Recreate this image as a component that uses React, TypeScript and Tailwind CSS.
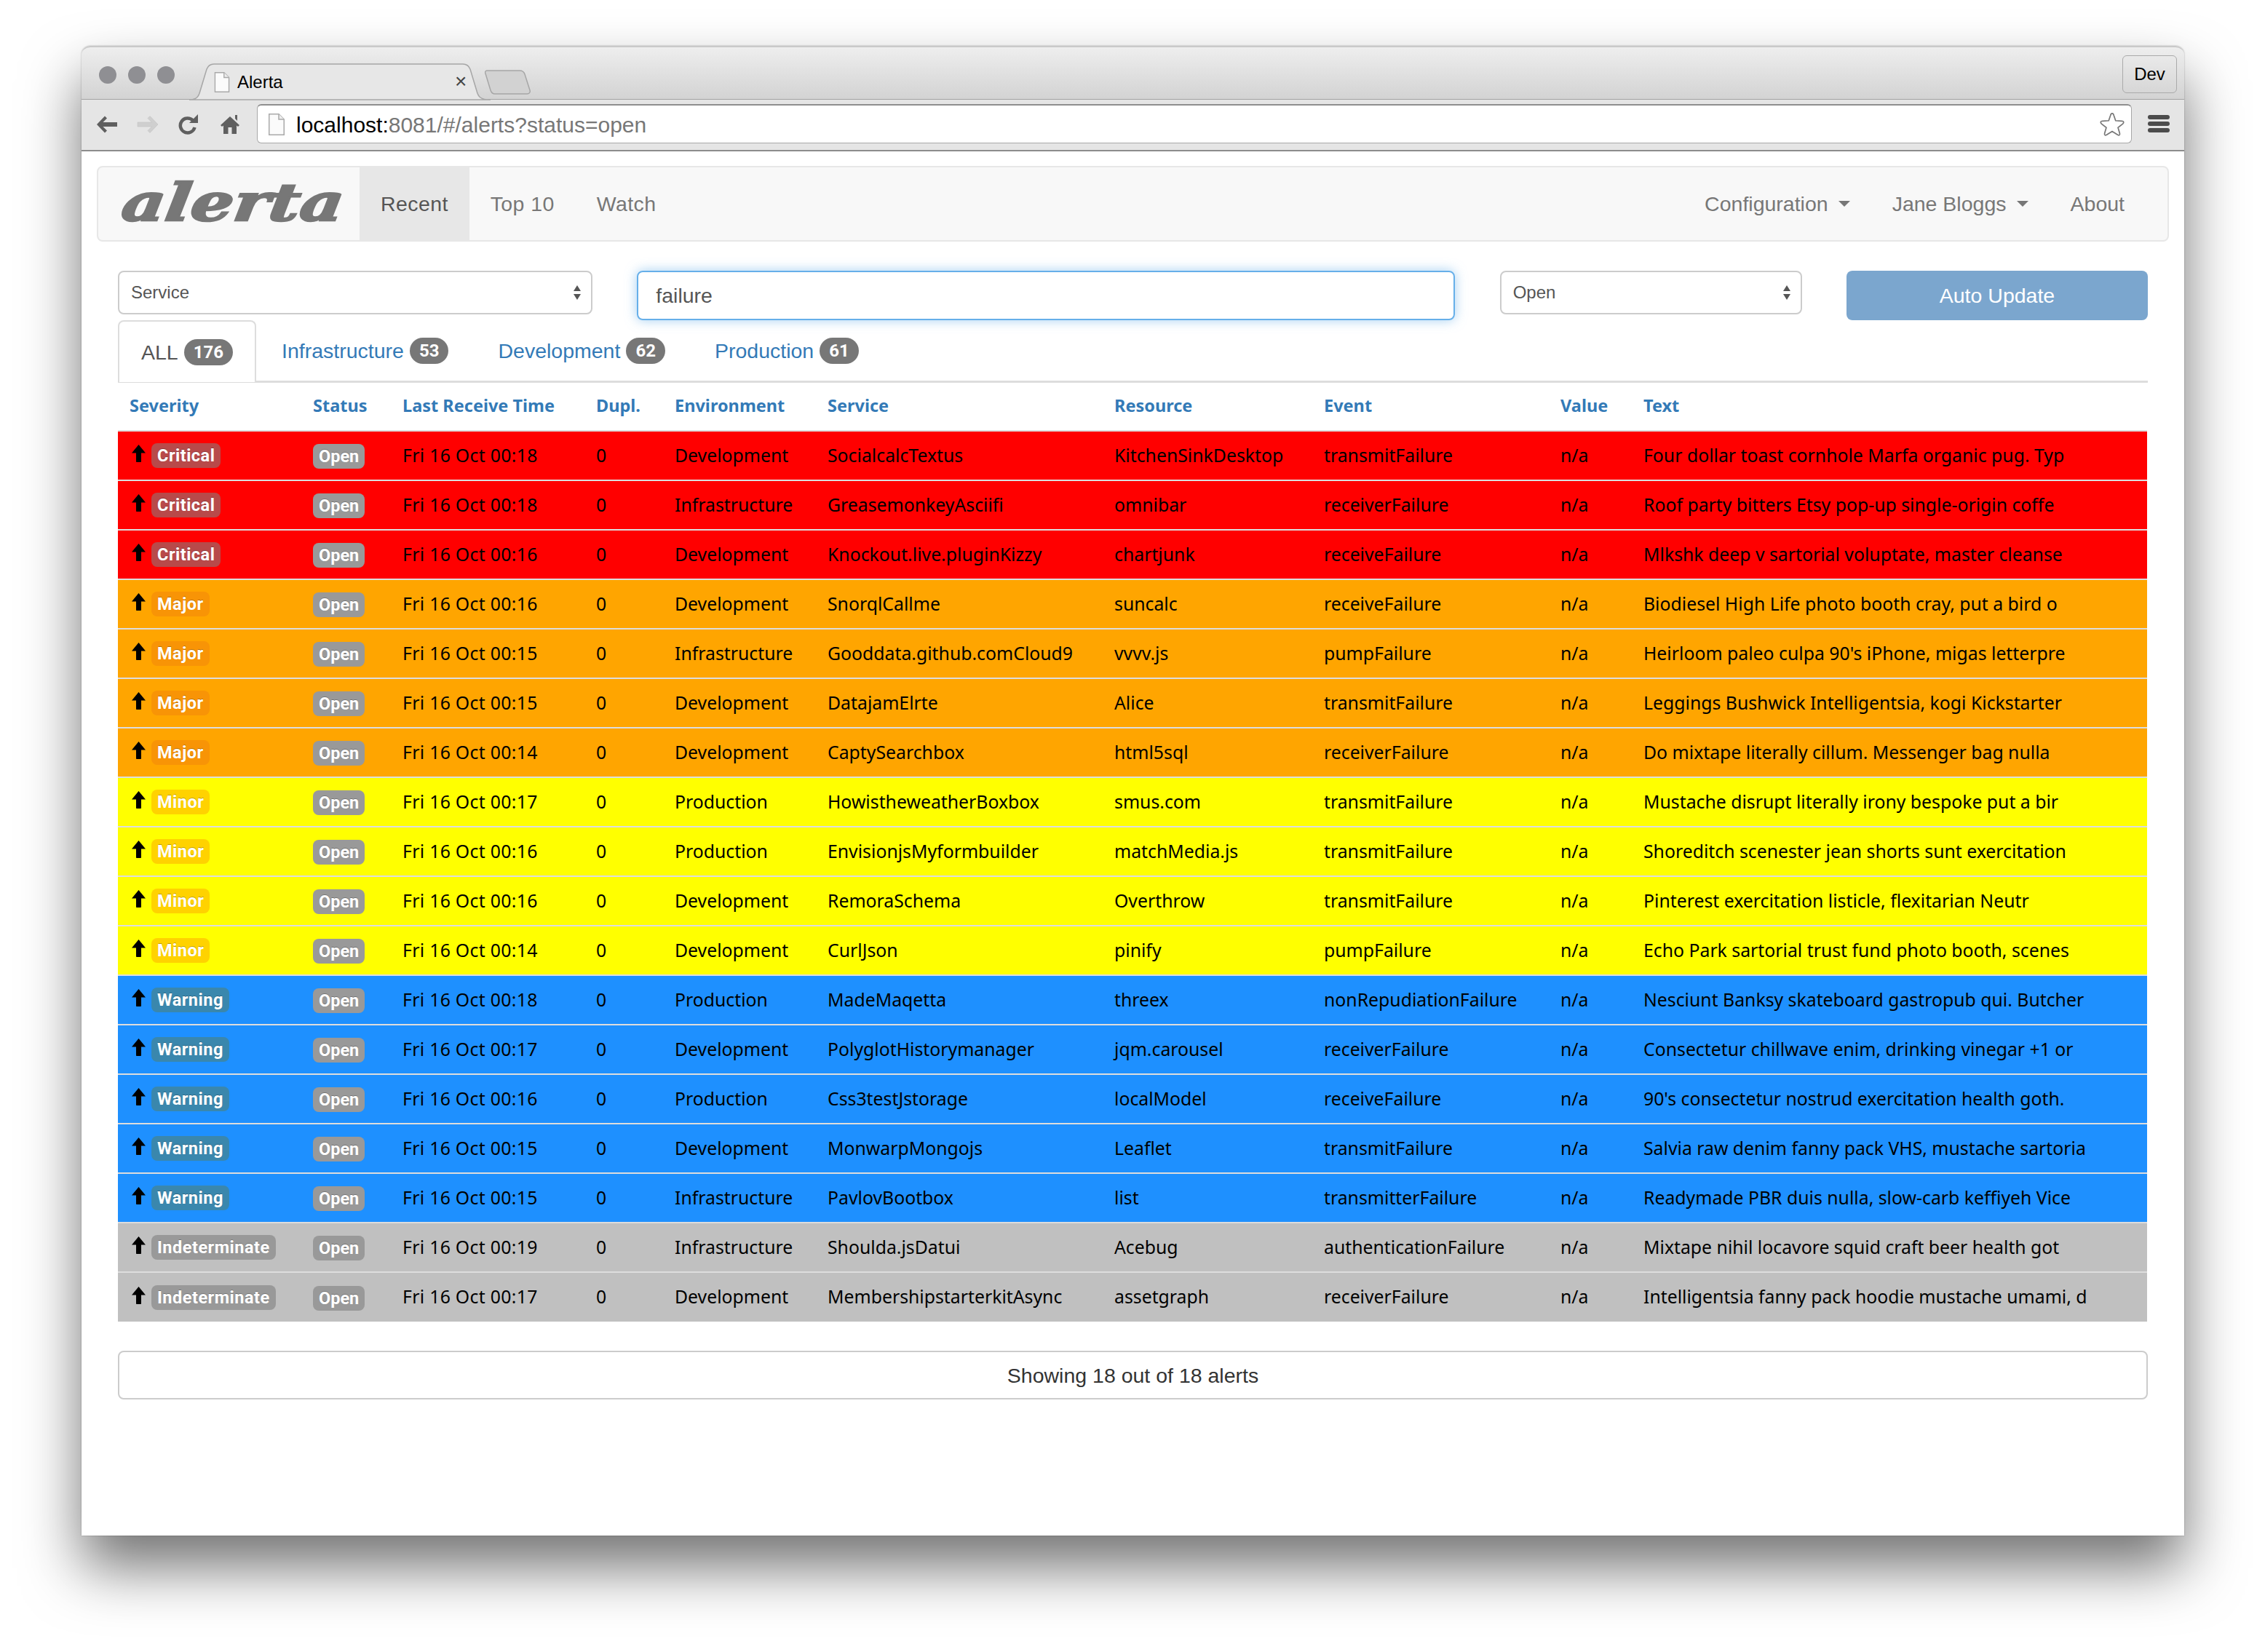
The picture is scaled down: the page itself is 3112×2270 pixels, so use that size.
import React from "react";

type Sev = "Critical" | "Major" | "Minor" | "Warning" | "Indeterminate";
const rowBg: Record<Sev, string> = {
  Critical: "bg-[#ff0000]",
  Major: "bg-[#ffa500]",
  Minor: "bg-[#ffff00]",
  Warning: "bg-[#1e90ff]",
  Indeterminate: "bg-[#c0c0c0]",
};
const labelBg: Record<Sev, string> = {
  Critical: "bg-[#b84a4a]",
  Major: "bg-[#f89406]",
  Minor: "bg-[#ffd200]",
  Warning: "bg-[#3a87ad]",
  Indeterminate: "bg-[#999999]",
};

const rows: [Sev, string, string, string, string, string, string][] = [
  ["Critical", "Fri 16 Oct 00:18", "Development", "SocialcalcTextus", "KitchenSinkDesktop", "transmitFailure", "Four dollar toast cornhole Marfa organic pug. Typ"],
  ["Critical", "Fri 16 Oct 00:18", "Infrastructure", "GreasemonkeyAsciifi", "omnibar", "receiverFailure", "Roof party bitters Etsy pop-up single-origin coffe"],
  ["Critical", "Fri 16 Oct 00:16", "Development", "Knockout.live.pluginKizzy", "chartjunk", "receiveFailure", "Mlkshk deep v sartorial voluptate, master cleanse"],
  ["Major", "Fri 16 Oct 00:16", "Development", "SnorqlCallme", "suncalc", "receiveFailure", "Biodiesel High Life photo booth cray, put a bird o"],
  ["Major", "Fri 16 Oct 00:15", "Infrastructure", "Gooddata.github.comCloud9", "vvvv.js", "pumpFailure", "Heirloom paleo culpa 90's iPhone, migas letterpre"],
  ["Major", "Fri 16 Oct 00:15", "Development", "DatajamElrte", "Alice", "transmitFailure", "Leggings Bushwick Intelligentsia, kogi Kickstarter"],
  ["Major", "Fri 16 Oct 00:14", "Development", "CaptySearchbox", "html5sql", "receiverFailure", "Do mixtape literally cillum. Messenger bag nulla"],
  ["Minor", "Fri 16 Oct 00:17", "Production", "HowistheweatherBoxbox", "smus.com", "transmitFailure", "Mustache disrupt literally irony bespoke put a bir"],
  ["Minor", "Fri 16 Oct 00:16", "Production", "EnvisionjsMyformbuilder", "matchMedia.js", "transmitFailure", "Shoreditch scenester jean shorts sunt exercitation"],
  ["Minor", "Fri 16 Oct 00:16", "Development", "RemoraSchema", "Overthrow", "transmitFailure", "Pinterest exercitation listicle, flexitarian Neutr"],
  ["Minor", "Fri 16 Oct 00:14", "Development", "CurlJson", "pinify", "pumpFailure", "Echo Park sartorial trust fund photo booth, scenes"],
  ["Warning", "Fri 16 Oct 00:18", "Production", "MadeMaqetta", "threex", "nonRepudiationFailure", "Nesciunt Banksy skateboard gastropub qui. Butcher"],
  ["Warning", "Fri 16 Oct 00:17", "Development", "PolyglotHistorymanager", "jqm.carousel", "receiverFailure", "Consectetur chillwave enim, drinking vinegar +1 or"],
  ["Warning", "Fri 16 Oct 00:16", "Production", "Css3testJstorage", "localModel", "receiveFailure", "90's consectetur nostrud exercitation health goth."],
  ["Warning", "Fri 16 Oct 00:15", "Development", "MonwarpMongojs", "Leaflet", "transmitFailure", "Salvia raw denim fanny pack VHS, mustache sartoria"],
  ["Warning", "Fri 16 Oct 00:15", "Infrastructure", "PavlovBootbox", "list", "transmitterFailure", "Readymade PBR duis nulla, slow-carb keffiyeh Vice"],
  ["Indeterminate", "Fri 16 Oct 00:19", "Infrastructure", "Shoulda.jsDatui", "Acebug", "authenticationFailure", "Mixtape nihil locavore squid craft beer health got"],
  ["Indeterminate", "Fri 16 Oct 00:17", "Development", "MembershipstarterkitAsync", "assetgraph", "receiverFailure", "Intelligentsia fanny pack hoodie mustache umami, d"],
];

const headers = ["Severity", "Status", "Last Receive Time", "Dupl.", "Environment", "Service", "Resource", "Event", "Value", "Text"];

function PageIcon({ className }: { className: string }) {
  return (
    <svg viewBox="0 0 22 30" className={className}>
      <path d="M0.75 0.75H14L21.25 8V29.25H0.75Z" fill="#fbfbfb" stroke="#a9a9a9" strokeWidth="1.5" />
      <path d="M14 0.75V8H21.25" fill="#eee" stroke="#a9a9a9" strokeWidth="1.5" />
    </svg>
  );
}

function UpDown() {
  return (
    <svg viewBox="0 0 10 20" className="w-[10px] h-[20px]">
      <path d="M5 0L10 8H0Z M5 20L0 12H10Z" fill="#555" />
    </svg>
  );
}

function Caret() {
  return (
    <svg viewBox="0 0 16 8" className="w-[16px] h-[8px] ml-[14px]">
      <path d="M0 0H16L8 8Z" fill="#777" />
    </svg>
  );
}

function NavLink({ children, active }: { children: React.ReactNode; active?: boolean }) {
  return (
    <div className={`h-full flex items-center px-[29px] tracking-[0.4px] ${active ? "bg-[#e7e7e7] text-[#555]" : "text-[#777]"}`}>{children}</div>
  );
}

function TabItem({ name, count, active }: { name: string; count: number; active?: boolean }) {
  return (
    <div
      className={`flex items-center gap-[8px] ${
        active
          ? "w-[190px] pl-[30px] border-2 border-[#ddd] border-b-0 rounded-t-lg bg-white text-[#555] -mb-[3px] h-[85px]"
          : "h-[83px] text-[#337ab7] pl-[35px] pr-[33px]"
      }`}
    >
      <span>{name}</span>
      <span className="h-[36px] px-[13px] flex items-center rounded-full bg-[#777] text-white text-[24px] font-bold font-['Roboto',sans-serif]">{count}</span>
    </div>
  );
}

export default function App() {
  return (
    <div className="w-[3112px] h-[2270px] bg-white pt-[63px] pl-[112px] overflow-hidden font-['Liberation_Sans',sans-serif]">
      <div className="w-[2889px] h-[2047px] flex flex-col bg-white rounded-t-xl shadow-[0_44px_80px_rgba(0,0,0,0.55),0_0_2px_rgba(0,0,0,0.35)]">
        {/* tab strip */}
        <div className="h-[74px] flex items-start rounded-t-xl border-t-2 border-[#c9c9c9] border-b border-b-[#a3a3a3] bg-gradient-to-b from-[#eeeeee] to-[#d3d3d3]">
          <div className="flex gap-[16px] pl-[24px] pt-[26px]">
            <div className="w-[24px] h-[24px] rounded-full bg-[#8f8f93]" />
            <div className="w-[24px] h-[24px] rounded-full bg-[#8f8f93]" />
            <div className="w-[24px] h-[24px] rounded-full bg-[#8f8f93]" />
          </div>
          <div className="relative ml-[20px] mt-[22px] w-[414px] h-[51px] flex items-center pl-[34px] text-[24px] text-black">
            <svg viewBox="0 0 414 51" className="absolute inset-0 w-full h-full">
              <path d="M0 50C10 50 13 46 15 38L24 8C26 3 29 1 34 1H376C381 1 384 3 386 8L395 38C397 46 400 50 414 50Z" fill="#e7e7e7" stroke="#a6a6a6" strokeWidth="1.5" />
            </svg>
            <PageIcon className="relative w-[22px] h-[28px]" />
            <span className="relative ml-[10px]">Alerta</span>
            <span className="absolute left-[365px] top-[8px] text-[28px] leading-[34px] text-[#444]">×</span>
          </div>
          <svg viewBox="0 0 64 34" className="w-[64px] h-[34px] mt-[31px] -ml-[8px]">
            <path d="M3 1H48C52 1 54 3 55 6L62 28C63 31 61 33 58 33H14C11 33 9 31 8 28L1 5C0 3 1 1 3 1Z" fill="#d2d2d2" stroke="#a6a6a6" strokeWidth="1.5" />
          </svg>
          <div className="ml-auto mr-[10px] mt-[11px] w-[75px] h-[52px] flex items-center justify-center border border-[#aaa] rounded-md text-[24px] text-black">Dev</div>
        </div>
        {/* toolbar */}
        <div className="h-[71px] flex items-start bg-[#e5e5e5] border-b-2 border-[#8c8c8c]">
          <div className="flex items-center h-[68px] pl-[19px] w-[241px]">
            <svg viewBox="0 0 32 28" className="w-[32px] h-[28px] shrink-0">
              <path d="M2 14L13 2.5L16 5.5L10.5 11H30V17H10.5L16 22.5L13 25.5Z" fill="#5f5f5f" />
            </svg>
            <svg viewBox="0 0 32 28" className="w-[32px] h-[28px] shrink-0 ml-[24px]">
              <path d="M30 14L19 2.5L16 5.5L21.5 11H2V17H21.5L16 22.5L19 25.5Z" fill="#cfcfcf" stroke="#bdbdbd" strokeWidth="0.5" />
            </svg>
            <svg viewBox="0 0 28 28" className="w-[28px] h-[28px] shrink-0 ml-[26px]">
              <path d="M20 8.5A10 10 0 1 0 22.5 18" fill="none" stroke="#5f5f5f" strokeWidth="4.5" />
              <path d="M15 12H27V0Z" fill="#5f5f5f" />
            </svg>
            <svg viewBox="0 0 26 28" className="w-[26px] h-[28px] shrink-0 ml-[30px]">
              <path d="M13 3L26 15L24 17L22 15.5V27H15.5V18H10.5V27H4V15.5L2 17L0 15Z" fill="#5f5f5f" />
              <path d="M20 1H23V9L20 6Z" fill="#5f5f5f" />
            </svg>
          </div>
          <div className="mt-[6px] w-[2576px] h-[54px] flex items-center pl-[15px] pr-[8px] bg-white rounded-md border border-[#a8a8a8] border-t-2 border-t-[#8f8f8f]">
            <PageIcon className="w-[22px] h-[30px]" />
            <div className="ml-[16px] mt-[2px] text-[30px] leading-[36px] text-[#777]"><span className="text-black">localhost:</span>8081/#/alerts?status=open</div>
            <svg viewBox="0 0 36 36" className="ml-auto w-[36px] h-[34px]">
              <path d="M18 2C19 2 20 3 20.5 5L23 12.5L32 13C35 13.3 35.5 15 33.5 17L26.5 22.5L29 31C29.5 33.5 28 34.5 26 33L18 28L10 33C8 34.5 6.5 33.5 7 31L9.5 22.5L2.5 17C0.5 15 1 13.3 4 13L13 12.5L15.5 5C16 3 17 2 18 2Z" fill="#fff" stroke="#777" strokeWidth="1.8" />
            </svg>
          </div>
          <div className="ml-[22px] mt-[21px] w-[30px] flex flex-col gap-[3px]">
            <div className="h-[6px] rounded-full bg-[#4c4c4c]" />
            <div className="h-[6px] rounded-full bg-[#4c4c4c]" />
            <div className="h-[6px] rounded-full bg-[#4c4c4c]" />
          </div>
        </div>
        {/* page */}
        <div className="flex-1 px-[21px] pt-[20px] text-[28.5px] leading-[40px]">
          <nav className="h-[104px] flex items-center bg-[#f8f8f8] border-2 border-[#e7e7e7] rounded-lg">
            <div className="w-[359px] h-full shrink-0 overflow-hidden">
              <div className="pl-[33px] h-full flex items-center">
                <span className="block origin-left [transform:scaleX(1.3)_skewX(-6deg)] font-['DejaVu_Serif',serif] font-bold italic text-[71px] leading-none text-[#777] [-webkit-text-stroke:2.5px_#777] -mt-[4px]">alerta</span>
              </div>
            </div>
            <NavLink active>Recent</NavLink>
            <NavLink>Top 10</NavLink>
            <NavLink>Watch</NavLink>
            <div className="ml-auto h-full flex items-center text-[#777] pr-[30px]">
              <div className="flex items-center px-[29px]">Configuration<Caret /></div>
              <div className="flex items-center px-[29px]">Jane Bloggs<Caret /></div>
              <div className="pl-[29px] pr-[29px]">About</div>
            </div>
          </nav>
          <div className="px-[29px]">
            <div className="mt-[40px] h-[68px] flex items-start justify-between">
              <div className="w-[652px] h-[60px] flex items-center justify-between pl-[16px] pr-[14px] border-2 border-[#ccc] rounded-lg text-[24px] text-[#555]">
                Service<UpDown />
              </div>
              <input
                readOnly
                value="failure"
                className="w-[1124px] h-[68px] px-[24px] border-2 border-[#66afe9] rounded-lg text-[28.5px] text-[#555] outline-none shadow-[0_0_16px_rgba(102,175,233,0.6)]"
              />
              <div className="w-[415px] h-[60px] flex items-center justify-between pl-[16px] pr-[14px] border-2 border-[#ccc] rounded-lg text-[24px] text-[#555]">
                Open<UpDown />
              </div>
              <div className="w-[414px] h-[68px] flex items-center justify-center rounded-lg bg-[#7ba6ce] text-white">Auto Update</div>
            </div>
            <div className="flex items-start border-b-[3px] border-[#ddd]">
              <TabItem name="ALL" count={176} active />
              <TabItem name="Infrastructure" count={53} />
              <TabItem name="Development" count={62} />
              <TabItem name="Production" count={61} />
            </div>
            <table className="w-[2788px] table-fixed font-['Noto_Sans',sans-serif] text-[24.8px] leading-[34px]">
              <colgroup>
                <col className="w-[252px]" />
                <col className="w-[123px]" />
                <col className="w-[266px]" />
                <col className="w-[108px]" />
                <col className="w-[210px]" />
                <col className="w-[394px]" />
                <col className="w-[288px]" />
                <col className="w-[325px]" />
                <col className="w-[114px]" />
                <col className="w-[708px]" />
              </colgroup>
              <thead>
                <tr className="h-[66px] border-b-2 border-[#ddd]">
                  {headers.map((h) => (
                    <th key={h} className="px-[16px] pb-[3px] text-left font-bold text-[23.5px] text-[#337ab7] whitespace-nowrap">{h}</th>
                  ))}
                </tr>
              </thead>
              <tbody>
                {rows.map((r, i) => (
                  <tr key={i} className={`${rowBg[r[0]]} h-[68px] ${i < rows.length - 1 ? "border-b-2 border-[#ddd]" : ""} text-black`}>
                    <td className="px-[16px]">
                      <div className="flex items-center gap-[6px]">
                        <svg viewBox="0 0 19 24" className="w-[19px] h-[24px] ml-[3px] -mt-[6px] mr-[2px]">
                          <path d="M9.5 0L19 11.5H13V23C13 23.6 12.6 24 12 24H7C6.4 24 6 23.6 6 23V11.5H0Z" fill="#000" />
                        </svg>
                        <span className={`h-[34px] px-[8px] flex items-center rounded-lg ${labelBg[r[0]]} text-white text-[23.5px] tracking-[0.5px] font-bold font-['Roboto',sans-serif] [text-shadow:0_-1px_0_rgba(0,0,0,0.25)]`}>{r[0]}</span>
                      </div>
                    </td>
                    <td className="px-[16px]">
                      <span className="inline-flex h-[34px] px-[8px] items-center rounded-lg bg-[#999] text-white text-[23.5px] font-bold font-['Roboto',sans-serif] [text-shadow:0_-1px_0_rgba(0,0,0,0.25)]">Open</span>
                    </td>
                    <td className="px-[16px] pb-[3px] whitespace-nowrap tracking-[0.3px]">{r[1]}</td>
                    <td className="px-[16px] pb-[3px]">0</td>
                    <td className="px-[16px] pb-[3px] whitespace-nowrap">{r[2]}</td>
                    <td className="px-[16px] pb-[3px] whitespace-nowrap">{r[3]}</td>
                    <td className="px-[16px] pb-[3px] whitespace-nowrap">{r[4]}</td>
                    <td className="px-[16px] pb-[3px] whitespace-nowrap">{r[5]}</td>
                    <td className="px-[16px] pb-[3px]">n/a</td>
                    <td className="px-[16px] pb-[3px] whitespace-nowrap">{r[6]}</td>
                  </tr>
                ))}
              </tbody>
            </table>
            <div className="mt-[40px] h-[67px] flex items-center justify-center border-2 border-[#ccc] rounded-lg text-[#333]">Showing 18 out of 18 alerts</div>
          </div>
        </div>
      </div>
    </div>
  );
}
